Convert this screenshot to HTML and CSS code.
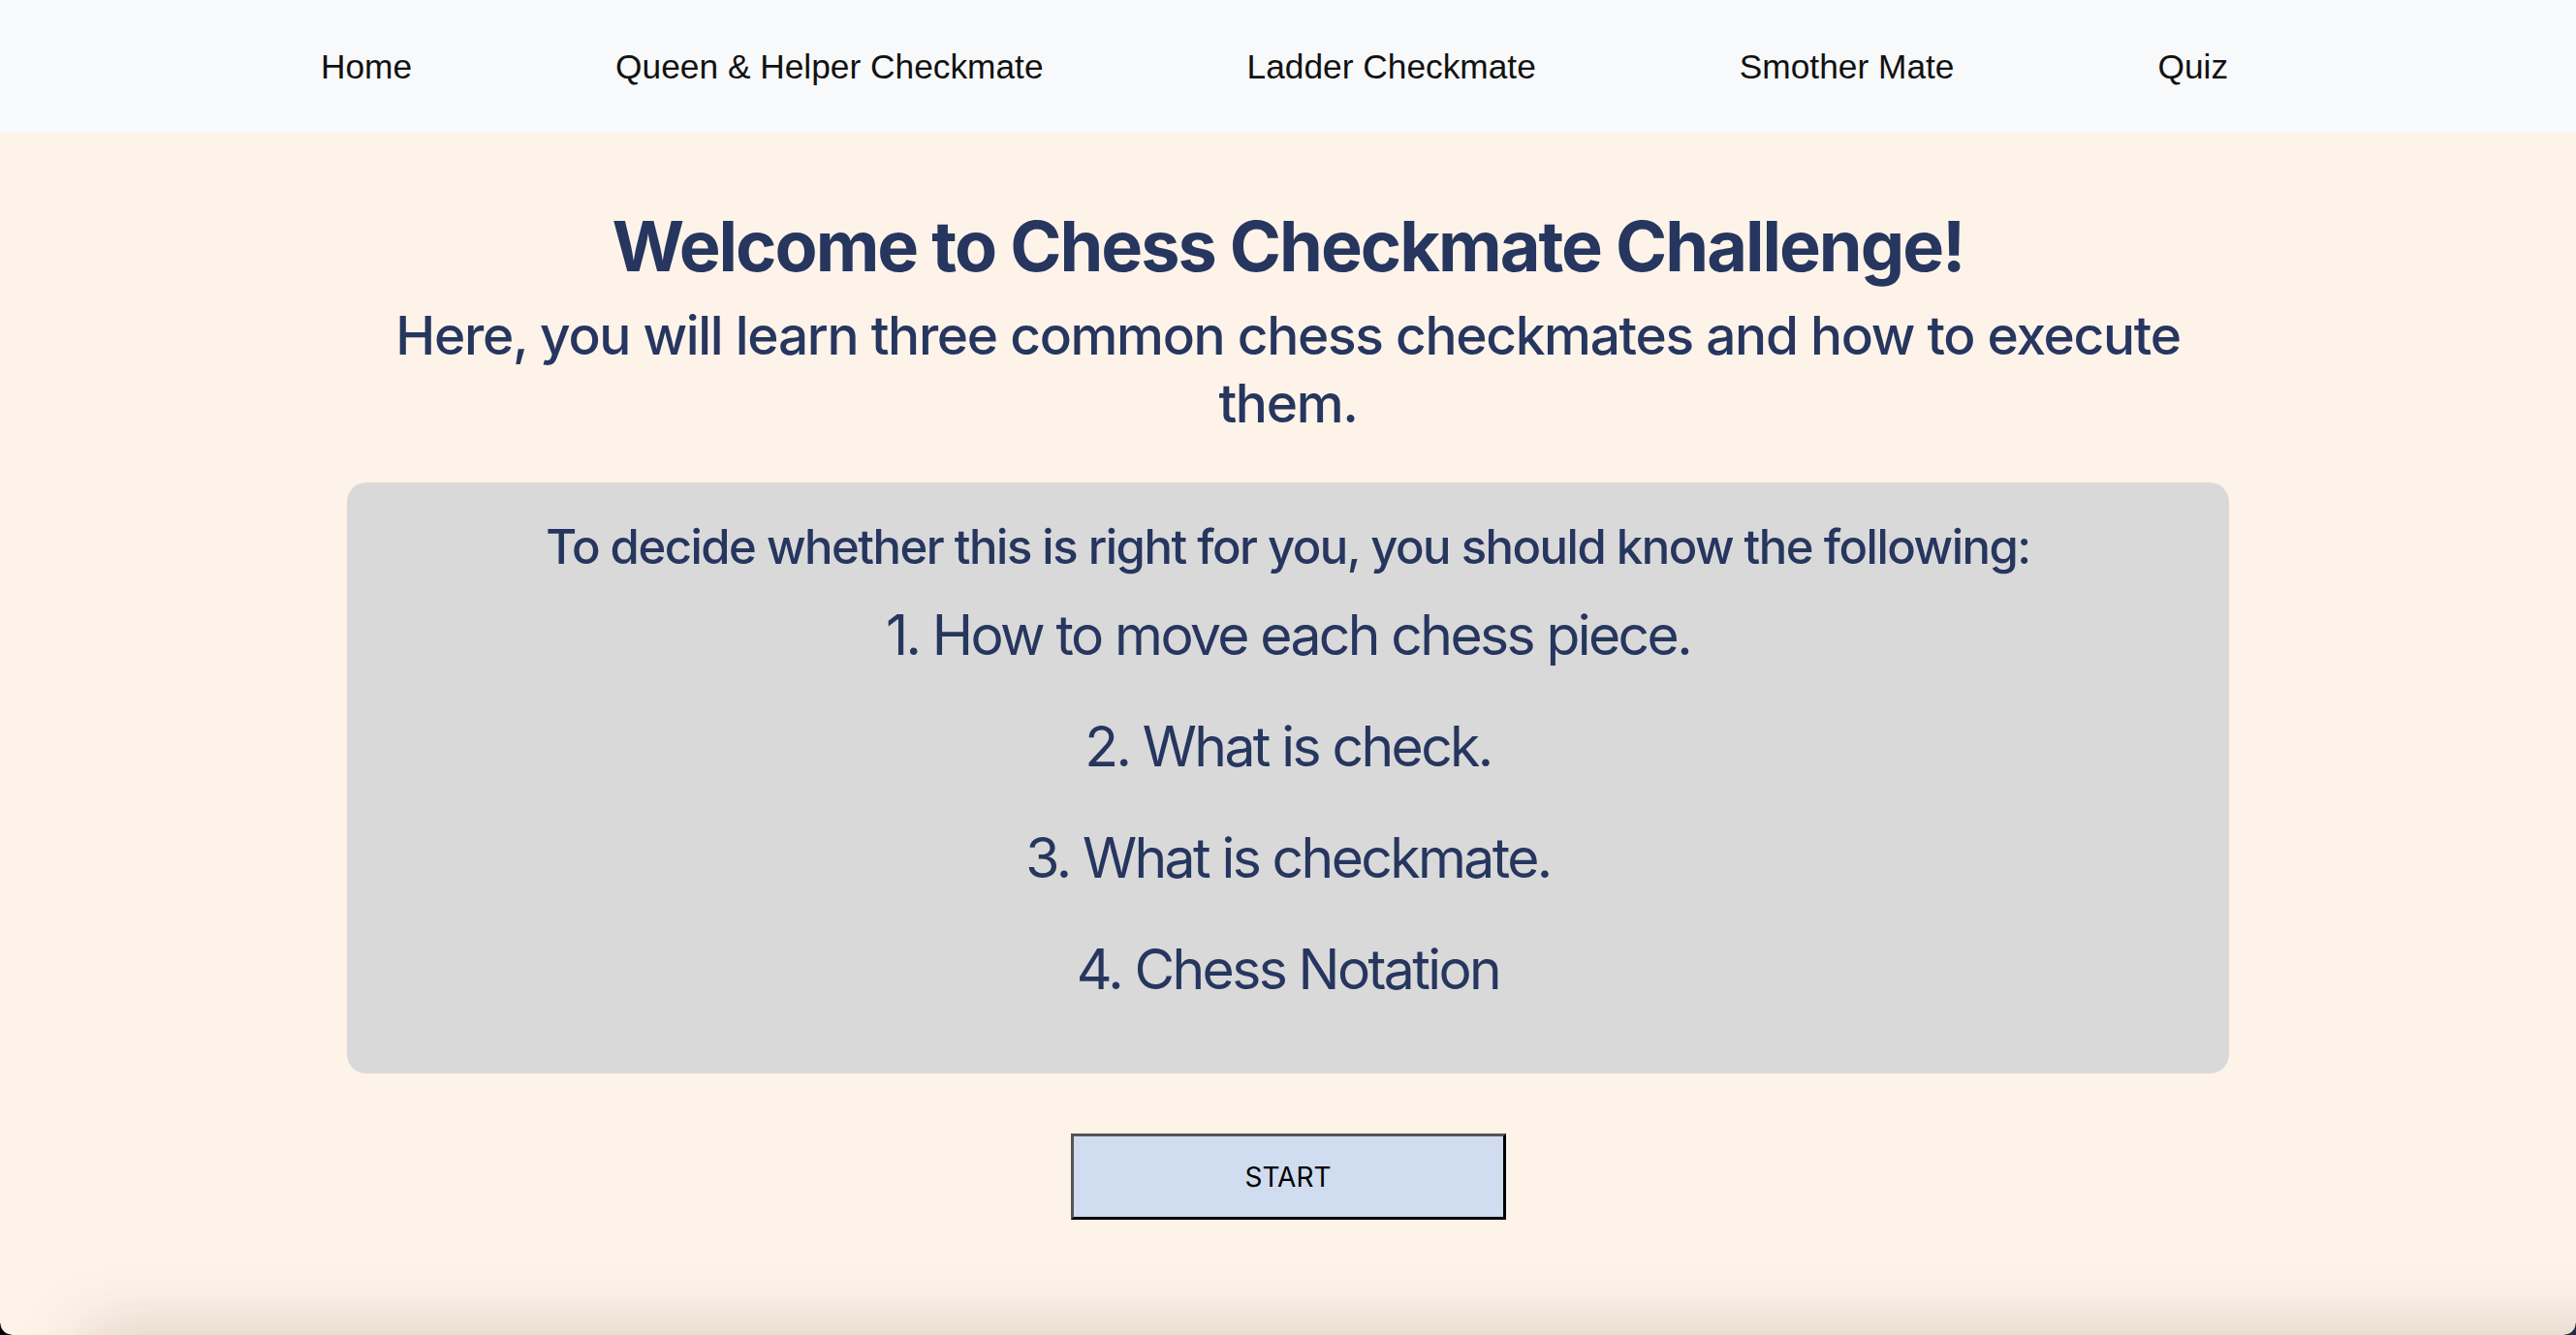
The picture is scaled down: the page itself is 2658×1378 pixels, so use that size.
FILE: index.html
```html
<!DOCTYPE html>
<html lang="en">
<head>
<meta charset="utf-8">
<title>Chess Checkmate Challenge</title>
<link rel="stylesheet" href="styles.css">
</head>
<body>
<nav class="topnav">
  <a class="nav-link" href="#">Home</a>
  <a class="nav-link" href="#">Queen &amp; Helper Checkmate</a>
  <a class="nav-link" href="#">Ladder Checkmate</a>
  <a class="nav-link" href="#">Smother Mate</a>
  <a class="nav-link" href="#">Quiz</a>
</nav>
<main class="main">
  <h1 class="title">Welcome to Chess Checkmate Challenge!</h1>
  <h2 class="subtitle">Here, you will learn three common chess checkmates and how to execute them.</h2>
  <section class="req-box">
    <h3 class="req-title">To decide whether this is right for you, you should know the following:</h3>
    <p class="req-item">1. How to move each chess piece.</p>
    <p class="req-item">2. What is check.</p>
    <p class="req-item">3. What is checkmate.</p>
    <p class="req-item">4. Chess Notation</p>
  </section>
  <div class="actions">
    <button class="start-btn" type="button">START</button>
  </div>
  <div class="below-card"></div>
</main>
<div class="corner corner-left"></div>
<div class="corner corner-right"></div>
</body>
</html>
```
FILE: styles.css
```css
html, body {
  margin: 0;
  padding: 0;
  overflow: hidden;
}
body {
  background: #fdf3e9;
  font-family: Inter, "Noto Sans", sans-serif;
  color: #26365f;
  height: 1378px;
}
.topnav {
  height: 137px;
  background: #f8f9fa;
  display: flex;
  justify-content: center;
  align-items: center;
  gap: 210px;
  padding-right: 28px;
}
.nav-link {
  font-family: "Liberation Sans", Arial, sans-serif;
  font-size: 35.3px;
  color: #111;
  text-decoration: none;
  line-height: 40px;
}
.main {
  display: flex;
  flex-direction: column;
  align-items: center;
  padding-top: 73px;
}
.title {
  margin: 0;
  font-size: 72px;
  line-height: 88px;
  font-weight: 700;
  text-align: center;
  letter-spacing: -2px;
}
.subtitle {
  margin: 13px 0 0;
  font-size: 55px;
  line-height: 70px;
  font-weight: 500;
  text-align: center;
  width: 1900px;
  letter-spacing: -1.3px;
}
.req-box {
  margin-top: 47px;
  width: 1942px;
  box-sizing: border-box;
  background: #d9d9d9;
  border-radius: 20px;
  padding: 37px 0 72px;
  display: flex;
  flex-direction: column;
  align-items: center;
  gap: 45px;
}
.req-title {
  margin: 0 0 -19px;
  font-size: 49px;
  line-height: 60px;
  font-weight: 500;
  letter-spacing: -1.5px;
}
.req-item {
  margin: 0;
  font-size: 57px;
  line-height: 70px;
  font-weight: 400;
  letter-spacing: -2.6px;
}
.actions {
  margin-top: 62px;
  display: flex;
  justify-content: center;
}
.start-btn {
  width: 449px;
  height: 89px;
  box-sizing: border-box;
  background: #d0dcef;
  border: 3px solid #000;
  border-top-color: #555;
  border-left-color: #555;
  font-family: Inter, "Noto Sans", sans-serif;
  font-size: 28px;
  color: #000;
  padding: 0;
}
.below-card {
  align-self: stretch;
  margin: 120px -100px 0 90px;
  height: 300px;
  background: #fdf3e9;
  box-shadow: 0 0 70px rgba(70, 45, 20, 0.22);
}
.corner {
  position: fixed;
  bottom: 0;
  width: 12px;
  height: 12px;
}
.corner-left {
  left: 0;
  background: radial-gradient(circle at 100% 0, transparent 11px, #000 12px);
}
.corner-right {
  right: 0;
  background: radial-gradient(circle at 0 0, transparent 11px, #1f2b47 12px);
}
```
